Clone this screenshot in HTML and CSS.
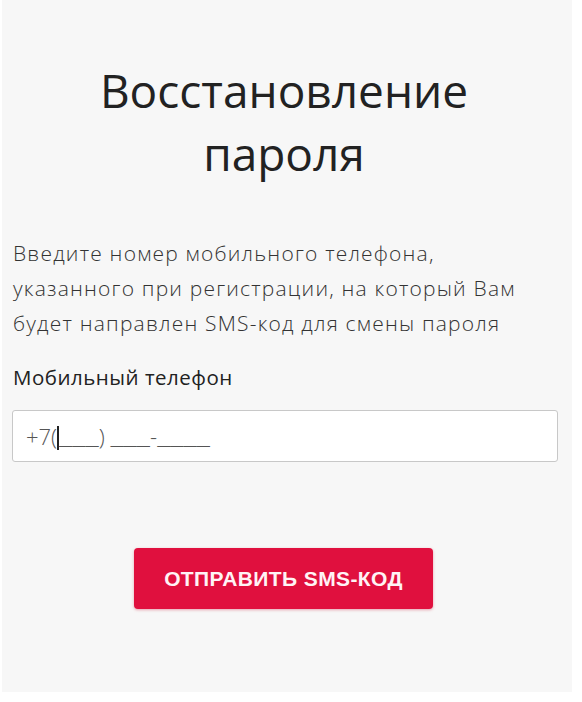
FILE: index.html
```html
<!DOCTYPE html>
<html lang="ru">
<head>
<meta charset="utf-8">
<link rel="stylesheet" href="styles.css">
</head>
<body>
<main class="card">
  <h1 class="title">Восстановление<br>пароля</h1>
  <p class="intro">Введите номер мобильного телефона,<br>указанного при регистрации, на который Вам<br>будет направлен SMS-код для смены пароля</p>
  <label class="label" for="phone">Мобильный телефон</label>
  <div class="field" id="phone"><span class="mask">+7(<span class="caret"></span><span class="u">___</span>) <span class="u">___</span>-<span class="u">____</span></span></div>
  <div class="actions"><button class="btn" type="button">Отправить SMS-код</button></div>
</main>
</body>
</html>
```
FILE: styles.css
```css
html, body { margin: 0; padding: 0; background: #ffffff; }
body { font-family: "Open Sans", "Liberation Sans", sans-serif; color: #2a2a2a; }
.card {
  box-sizing: border-box;
  width: 570px;
  height: 692px;
  margin-left: 2px;
  background: #f7f7f7;
  padding: 59px 14px 0 10px;
}
.title {
  margin: 0;
  text-align: center;
  font-family: "Open Sans", sans-serif;
  font-weight: 500;
  font-size: 46px;
  line-height: 63px;
  color: #222;
  padding-right: 2px;
}
.intro {
  margin: 51px 0 0 0;
  font-size: 21px;
  line-height: 35px;
  font-weight: 300;
  letter-spacing: 1.2px;
  color: #333;
  white-space: nowrap;
  padding-left: 1px;
}
.label {
  display: block;
  margin-top: 21px;
  font-size: 20.5px;
  line-height: 30px;
  letter-spacing: 0.5px;
  color: #222;
  padding-left: 1px;
}
.field {
  margin-top: 18px;
  height: 50px;
  background: #fff;
  border: 1px solid #c8c8c8;
  border-radius: 3px;
  display: flex;
  align-items: center;
  padding-left: 13px;
}
.mask { font-size: 22px; color: #555; font-weight: 300; }
.u { font-family: "Liberation Mono", monospace; letter-spacing: 0; }
.caret { display: inline-block; width: 2px; height: 24px; background: #222; vertical-align: -5px; }
.actions { display: flex; justify-content: center; margin-top: 86px; padding-left: 0; padding-right: 3px; }
.btn {
  width: 299px;
  height: 61px;
  border: none;
  border-radius: 4px;
  background: #e0103e;
  color: #fff3f5;
  font-family: "Liberation Sans", sans-serif;
  font-weight: 700;
  font-size: 21px;
  letter-spacing: 0.4px;
  text-transform: uppercase;
  box-shadow: 0 1px 3px rgba(200,0,40,0.35);
}
```
